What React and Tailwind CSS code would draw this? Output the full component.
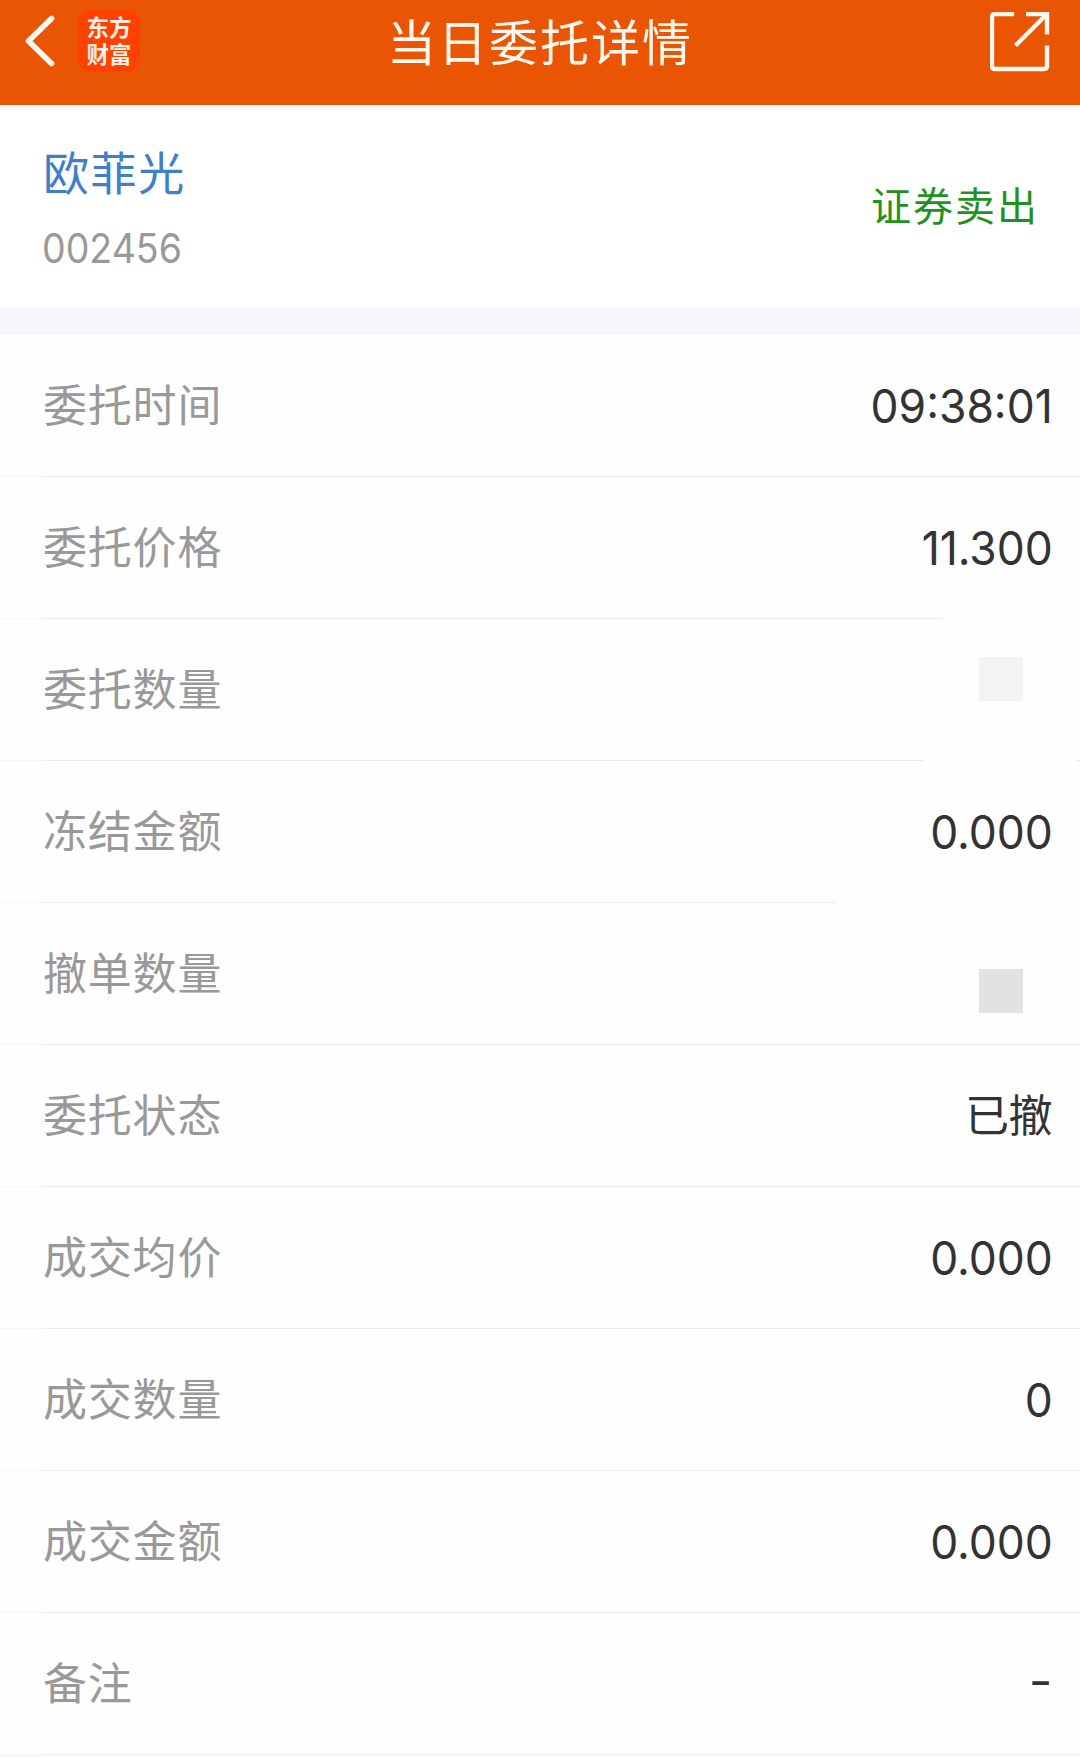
const CJK = "font-['Noto_Sans_CJK_SC',sans-serif]";
const DIGITS = "font-['Inter','Noto_Sans_CJK_SC',sans-serif]";

const rows = [
  { label: "委托时间", value: "09:38:01" },
  { label: "委托价格", value: "11.300", line: "w-[901px]" },
  { label: "委托数量", mask: "mt-[38px] bg-[#f3f3f3]", line: "w-[881px]", tail: true },
  { label: "冻结金额", value: "0.000", line: "w-[794px]" },
  { label: "撤单数量", mask: "mt-[66px] bg-[#e2e2e2]" },
  { label: "委托状态", text: "已撤" },
  { label: "成交均价", value: "0.000" },
  { label: "成交数量", value: "0" },
  { label: "成交金额", value: "0.000" },
  { label: "备注", dash: "-" },
];

function BackIcon() {
  return (
    <svg width="32" height="54" viewBox="0 0 32 54" fill="none" stroke="#fff8ee" strokeWidth="5.6" strokeLinecap="round" strokeLinejoin="round">
      <path d="M28.500 4.500 5.500 27 28.500 49.500" />
    </svg>
  );
}

function ShareIcon() {
  return (
    <svg width="60" height="60" viewBox="0 0 60 60" fill="none" stroke="#fff8ee" strokeWidth="4.4">
      <path d="M24.200 2H5Q2 2 2 5V54Q2 57 5 57H54Q57 57 57 54V33.500" />
      <path d="M36 2H57V22.500" />
      <path d="M56 3 25.500 33.500" />
    </svg>
  );
}

function Logo() {
  return (
    <div className="mt-[10px] ml-[23px] h-[62px] w-[62px] rounded-[13px] bg-[#ff4203] pt-[3px] text-center font-['Noto_Sans_CJK_SC',sans-serif] text-[22.500px] leading-[27px] font-bold text-[#fff1e6]">
      东方
      <br />
      财富
    </div>
  );
}

function Row({ label, value, text, mask, dash, line, tail }) {
  return (
    <div className="flex h-[142px] flex-col bg-[#fefefe]">
      <div className="flex h-[141px] justify-between pr-[28px] pl-[43px]">
        <span className={`${CJK} mt-[36px] text-[44px] leading-[64px] tracking-[0.8px] text-[#999999]`}>{label}</span>
        {value && (
          <span className={`${DIGITS} mt-[39px] -mr-px origin-right scale-x-[0.945] text-[47px] leading-[64px] text-[#333333]`}>{value}</span>
        )}
        {text && <span className={`${CJK} mt-[36px] text-[44px] leading-[64px] -tracking-[0.5px] text-[#333333]`}>{text}</span>}
        {mask && <span className={`${mask} mr-[29px] h-[44px] w-[44px]`} />}
        {dash && (
          <span className={`${DIGITS} mt-[36px] -mr-px origin-right scale-x-110 text-[47px] leading-[64px] text-[#333333]`}>{dash}</span>
        )}
      </div>
      <div className="flex h-px">
        <div className="w-[42px] bg-[#f7f7f7]" />
        <div className={`bg-[#ebebeb] ${line || "flex-1"}`} />
        {tail && <div className="ml-auto w-[3px] bg-[#ebebeb]" />}
      </div>
    </div>
  );
}

export default function App() {
  return (
    <div className="h-[1757px] w-[1080px] overflow-hidden bg-[#f9f9f9]">
      <header className="grid h-[105px] grid-cols-[1fr_auto_1fr] items-start bg-[#ea5504]">
        <div className="flex">
          <div className="mt-[14px] ml-[23px]">
            <BackIcon />
          </div>
          <Logo />
        </div>
        <h1 className={`${CJK} mt-[4px] text-[49px] leading-[72px] tracking-[2px] text-[#fff8ee]`}>
          当日委托详情
        </h1>
        <div className="mt-[12px] mr-[30px] justify-self-end">
          <ShareIcon />
        </div>
      </header>

      <section className="flex h-[202px] justify-between bg-white pr-[41px] pl-[43px]">
        <div className="flex flex-col items-start">
          <span className={`${CJK} mt-[32px] text-[46px] leading-[66px] tracking-[1.600px] text-[#3e7ecb]`}>欧菲光</span>
          <span className={`${DIGITS} mt-[20px] -ml-px origin-left scale-x-[0.915] text-[41px] leading-[50px] text-[#999999]`}>002456</span>
        </div>
        <span className={`${CJK} mt-[69px] text-[40px] leading-[60px] tracking-[2px] text-[#1f931c]`}>证券卖出</span>
      </section>

      <div className="h-[28px] bg-[#f6f7fa]" />

      <main>
        {rows.map((row) => (
          <Row key={row.label} {...row} />
        ))}
      </main>
    </div>
  );
}
